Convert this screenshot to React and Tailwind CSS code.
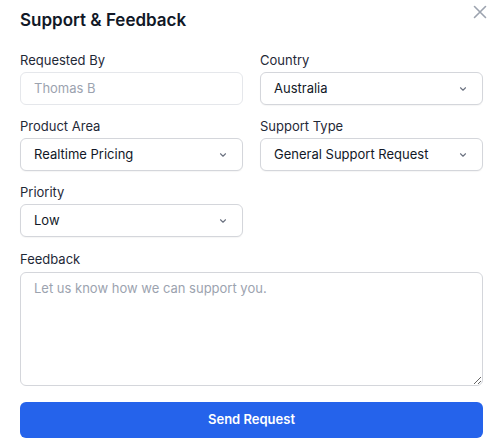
import React from "react";

const Chevron = () => (
  <svg width="10" height="10" viewBox="0 0 10 10" fill="none" className="shrink-0">
    <path d="M2.5 3.75L5 6.25L7.5 3.75" stroke="#6b7280" strokeWidth="1.1" strokeLinecap="round" strokeLinejoin="round" />
  </svg>
);

const Select = ({ value }) => (
  <div className="flex h-[33px] items-center justify-between rounded-md border border-[#d4d6db] bg-white pl-[13px] pr-[14px] text-[13px] text-[#111827] shadow-[0_1px_1px_rgba(0,0,0,0.04)]">
    <span>{value}</span>
    <Chevron />
  </div>
);

const Field = ({ label, children }) => (
  <div className="flex flex-col">
    <label className="mb-[3px] text-[13px] leading-[18px] text-[#1f2937]">{label}</label>
    {children}
  </div>
);

export default function App() {
  return (
    <div className="relative h-[447px] w-[502px] bg-white pl-5 pr-[19px] pt-[9px]" style={{ fontFamily: "Inter, 'Noto Sans', sans-serif" }}>
      {/* close */}
      <button className="absolute right-[14px] top-[4px] p-0">
        <svg width="16" height="16" viewBox="0 0 16 16" fill="none">
          <path d="M2.5 2.5L13.5 13.5M13.5 2.5L2.5 13.5" stroke="#9ca3af" strokeWidth="1.6" strokeLinecap="round" />
        </svg>
      </button>

      <h2 className="text-[17px] font-semibold leading-[22px] text-[#111827]">Support &amp; Feedback</h2>

      <div className="mt-[20px] grid grid-cols-2 gap-x-[17px] gap-y-[12px]">
        <Field label="Requested By">
          <div className="flex h-[33px] items-center rounded-md border border-[#e5e7eb] bg-white pl-[13px] text-[13px] text-[#9ca3af]">
            Thomas B
          </div>
        </Field>
        <Field label="Country">
          <Select value="Australia" />
        </Field>
        <Field label="Product Area">
          <Select value="Realtime Pricing" />
        </Field>
        <Field label="Support Type">
          <Select value="General Support Request" />
        </Field>
        <Field label="Priority">
          <Select value="Low" />
        </Field>
      </div>

      <div className="mt-[13px] flex flex-col">
        <label className="mb-[4px] text-[13px] leading-[18px] text-[#1f2937]">Feedback</label>
        <textarea
          className="h-[114px] resize-y rounded-md border border-[#d4d6db] px-[13px] py-[6px] text-[13px] text-[#111827] outline-none placeholder:text-[#9ca3af]"
          placeholder="Let us know how we can support you."
        />
      </div>

      <button className="mt-[16px] flex h-[36px] w-full items-center justify-center rounded-md bg-[#2563eb] text-[13px] font-semibold text-white">
        Send Request
      </button>
    </div>
  );
}
